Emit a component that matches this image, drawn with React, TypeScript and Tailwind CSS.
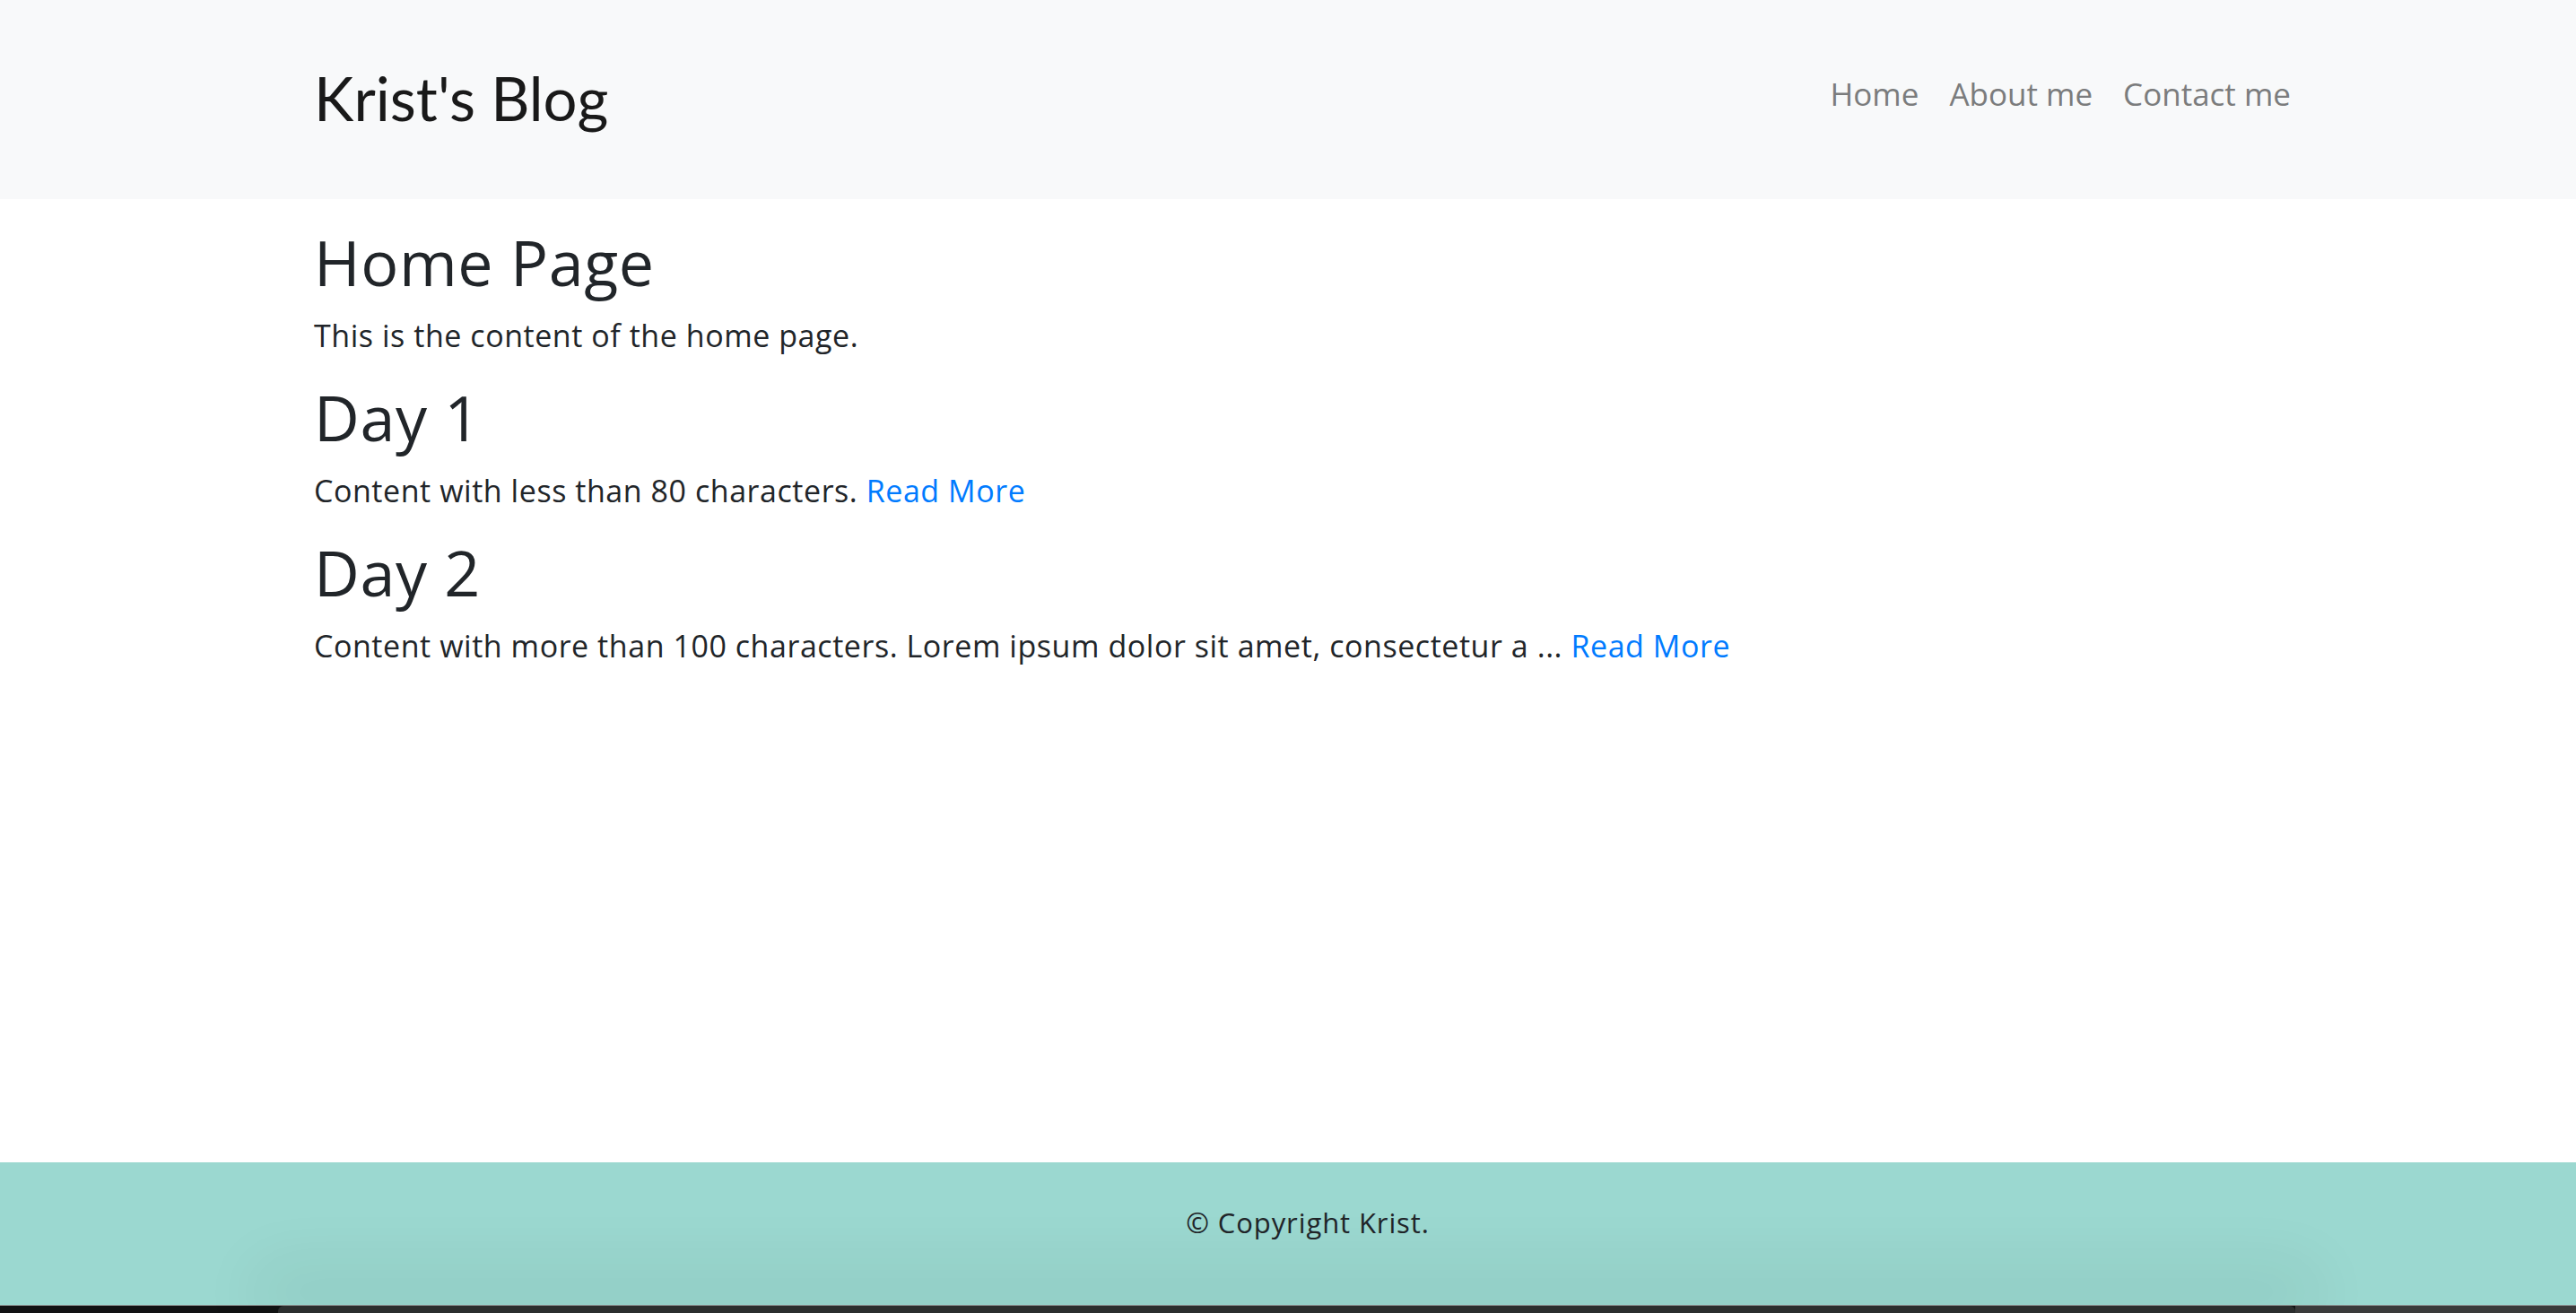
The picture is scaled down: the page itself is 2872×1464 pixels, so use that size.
import React from "react";

const body = { fontFamily: '"Open Sans", "Noto Sans", sans-serif' };
const brand = { fontFamily: 'Lato, "Noto Sans", sans-serif' };

function Post({ title, children }: { title: string; children: React.ReactNode }) {
  return (
    <section>
      <h2 className="text-[70px] leading-[84px] font-normal text-[#212529] mb-[16px] tracking-[0.6px]">{title}</h2>
      <p className="text-[34px] leading-[48px] text-[#212529] mb-[25px] tracking-[0.55px]">{children}</p>
    </section>
  );
}

export default function App() {
  return (
    <div className="h-[1464px] w-full flex flex-col bg-white" style={body}>
      <header className="h-[222px] shrink-0 bg-[#f8f9fa] flex items-center justify-between pl-[350px] pr-[302px]">
        <a className="text-[67px] leading-[80px] text-[#191919] mt-[-4px]" style={brand}>
          Krist's Blog
        </a>
        <nav className="flex items-center mt-[-12px]">
          {["Home", "About me", "Contact me"].map((l) => (
            <a key={l} className="px-[17px] last:pr-[16px] text-[35px] leading-[48px] text-[#7b7c7d]">
              {l}
            </a>
          ))}
        </nav>
      </header>
      <main className="flex-1 pt-[28px] px-[350px]">
        <Post title="Home Page">This is the content of the home page.</Post>
        <Post title="Day 1">
          Content with less than 80 characters. <a className="text-[#007bff]">Read More</a>
        </Post>
        <Post title="Day 2">
          Content with more than 100 characters. Lorem ipsum dolor sit amet, consectetur a ...{" "}
          <a className="text-[#007bff]">Read More</a>
        </Post>
      </main>
      <footer className="h-[159px] shrink-0 bg-[#9bd8d0] pt-[45px] text-center pl-[44px]">
        <p className="text-[31px] leading-[44px] text-[#212529] tracking-[0.9px]">© Copyright Krist.</p>
      </footer>
      <div className="h-[9px] shrink-0 bg-[#111213] border-t border-[#8a8f8e] flex">
        <div className="w-[310px] shrink-0"></div>
        <div className="w-[2249px] shrink-0 rounded-t-[6px] bg-[#2b2e2e] shadow-[0_-20px_70px_25px_rgba(0,40,35,0.07)]"></div>
        <div className="flex-1 bg-[#3a3b3b]"></div>
      </div>
    </div>
  );
}
